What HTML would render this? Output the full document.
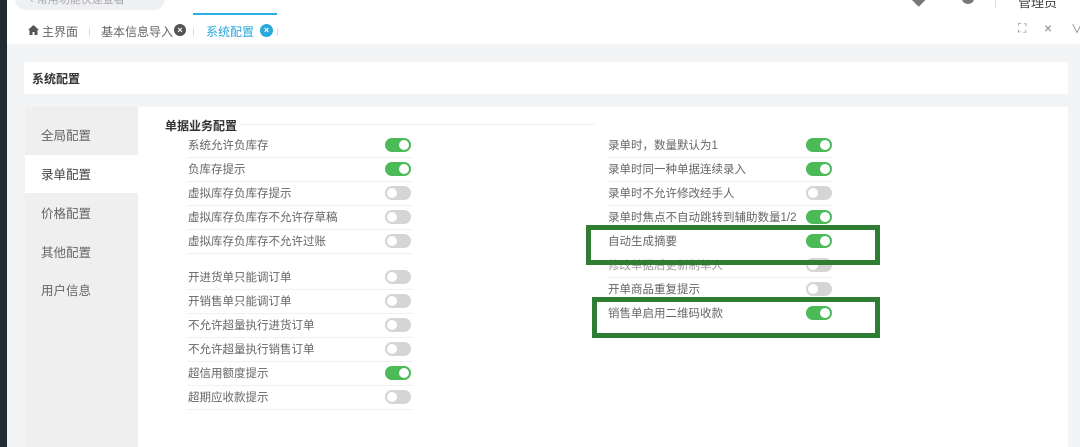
<!DOCTYPE html>
<html><head><meta charset="utf-8"><style>
*{margin:0;padding:0;box-sizing:border-box}
body{width:1080px;height:447px;overflow:hidden;background:#f3f4f6;font-family:"Liberation Sans","Noto Sans CJK SC",sans-serif;position:relative;color:#555}
.a{position:absolute}
.t{font-size:11.5px;color:#666;white-space:nowrap}
.tg{position:absolute;width:26px;height:14px;border-radius:7px;background:#d5d5d5}
.tg::after{content:"";position:absolute;top:2px;left:2px;width:10px;height:10px;border-radius:50%;background:#fff}
.tg.on{background:#4cbb57}
.tg.on::after{left:14px}
.ln{position:absolute;height:1px;background:#f0f0f0}
.gb{position:absolute;border:5px solid #2f7d32}
</style></head><body>
<div class="a" style="left:0;top:0;width:1080px;height:44px;background:#fff"></div>
<div class="a" style="left:0;top:0;width:7px;height:447px;background:#1f2a33"></div>
<div class="a" style="left:15px;top:-12px;width:150px;height:22px;border-radius:11px;background:#eef0f4"></div>
<div class="a t" style="left:30px;top:-9px;color:#aaa;font-size:11px">‹ 常用功能快速查看</div>
<div class="a" style="left:912px;top:-6px;width:12px;height:10px;background:#777;transform:rotate(45deg)"></div>
<div class="a" style="left:962px;top:-6px;width:12px;height:10px;border-radius:50%;background:#777"></div>
<div class="a" style="left:995px;top:-4px;width:1px;height:12px;background:#ddd"></div>
<div class="a t" style="left:1018px;top:-8px;font-size:13px;color:#444">管理员</div>
<div class="a" style="left:193px;top:13px;width:84px;height:2px;background:#2ab0e0"></div>
<svg class="a" style="left:28px;top:25px" width="11" height="10" viewBox="0 0 11 10"><path d="M5.5 0L0 5h1.5v5h3V7h2v3h3V5H11z" fill="#555"/></svg>
<div class="a t" style="left:42px;top:23px;font-size:12px;color:#666">主界面</div>
<div class="a" style="left:89px;top:28px;width:1px;height:8px;background:#ddd"></div>
<div class="a t" style="left:101px;top:23px;font-size:12px;color:#666">基本信息导入</div>
<div class="a" style="left:174px;top:24px;width:12px;height:12px;border-radius:50%;background:#555;color:#fff;font-size:9px;line-height:12px;text-align:center;font-weight:bold">×</div>
<div class="a" style="left:193px;top:28px;width:1px;height:8px;background:#ddd"></div>
<div class="a t" style="left:206px;top:23px;font-size:12px;color:#29a8dd">系统配置</div>
<div class="a" style="left:260px;top:24px;width:13px;height:13px;border-radius:50%;background:#29a8dd;color:#fff;font-size:9px;line-height:13px;text-align:center;font-weight:bold">×</div>
<div class="a" style="left:277px;top:28px;width:1px;height:8px;background:#ddd"></div>
<div class="a t" style="left:1018px;top:21px;font-size:12px;color:#888">⛶</div>
<div class="a t" style="left:1044px;top:20px;font-size:14px;color:#888">×</div>
<div class="a t" style="left:1071px;top:20px;font-size:12px;color:#888">∨</div>
<div class="a" style="left:24px;top:62px;width:1044px;height:32px;background:#fff"></div>
<div class="a" style="left:32px;top:70px;font-size:12px;font-weight:bold;color:#333">系统配置</div>
<div class="a" style="left:25px;top:107px;width:113px;height:340px;background:#efefef"></div>
<div class="a" style="left:25px;top:155px;width:113px;height:38px;background:#fff"></div>
<div class="a t" style="left:41px;top:125px;font-size:12.5px">全局配置</div>
<div class="a t" style="left:41px;top:164px;font-size:12.5px;color:#444">录单配置</div>
<div class="a t" style="left:41px;top:203px;font-size:12.5px">价格配置</div>
<div class="a t" style="left:41px;top:242px;font-size:12.5px">其他配置</div>
<div class="a t" style="left:41px;top:280px;font-size:12.5px">用户信息</div>
<div class="a" style="left:138px;top:107px;width:930px;height:340px;background:#fff"></div>
<div class="a" style="left:165px;top:117px;font-size:12px;font-weight:bold;color:#333">单据业务配置</div>
<div class="a" style="left:240px;top:124px;width:355px;height:1px;background:#eee"></div>

<div class="a t" style="left:188px;top:137px">系统允许负库存</div><div class="tg on" style="left:385px;top:138px"></div><div class="ln" style="left:187px;top:157px;width:225px"></div>
<div class="a t" style="left:188px;top:161px">负库存提示</div><div class="tg on" style="left:385px;top:162px"></div><div class="ln" style="left:187px;top:181px;width:225px"></div>
<div class="a t" style="left:188px;top:185px">虚拟库存负库存提示</div><div class="tg" style="left:385px;top:186px"></div><div class="ln" style="left:187px;top:205px;width:225px"></div>
<div class="a t" style="left:188px;top:209px">虚拟库存负库存不允许存草稿</div><div class="tg" style="left:385px;top:210px"></div><div class="ln" style="left:187px;top:229px;width:225px"></div>
<div class="a t" style="left:188px;top:233px">虚拟库存负库存不允许过账</div><div class="tg" style="left:385px;top:234px"></div><div class="ln" style="left:187px;top:253px;width:225px"></div>

<div class="a t" style="left:188px;top:269px">开进货单只能调订单</div><div class="tg" style="left:385px;top:270px"></div><div class="ln" style="left:187px;top:289px;width:225px"></div>
<div class="a t" style="left:188px;top:293px">开销售单只能调订单</div><div class="tg" style="left:385px;top:294px"></div><div class="ln" style="left:187px;top:313px;width:225px"></div>
<div class="a t" style="left:188px;top:317px">不允许超量执行进货订单</div><div class="tg" style="left:385px;top:318px"></div><div class="ln" style="left:187px;top:337px;width:225px"></div>
<div class="a t" style="left:188px;top:341px">不允许超量执行销售订单</div><div class="tg" style="left:385px;top:342px"></div><div class="ln" style="left:187px;top:361px;width:225px"></div>
<div class="a t" style="left:188px;top:365px">超信用额度提示</div><div class="tg on" style="left:385px;top:366px"></div><div class="ln" style="left:187px;top:385px;width:225px"></div>
<div class="a t" style="left:188px;top:389px">超期应收款提示</div><div class="tg" style="left:385px;top:390px"></div><div class="ln" style="left:187px;top:409px;width:225px"></div>

<div class="a t" style="left:608px;top:137px">录单时，数量默认为1</div><div class="tg on" style="left:806px;top:138px"></div><div class="ln" style="left:607px;top:157px;width:226px"></div>
<div class="a t" style="left:608px;top:161px">录单时同一种单据连续录入</div><div class="tg on" style="left:806px;top:162px"></div><div class="ln" style="left:607px;top:181px;width:226px"></div>
<div class="a t" style="left:608px;top:185px">录单时不允许修改经手人</div><div class="tg" style="left:806px;top:186px"></div><div class="ln" style="left:607px;top:205px;width:226px"></div>
<div class="a t" style="left:608px;top:209px">录单时焦点不自动跳转到辅助数量1/2</div><div class="tg on" style="left:806px;top:210px"></div><div class="ln" style="left:607px;top:229px;width:226px"></div>
<div class="a t" style="left:608px;top:233px">自动生成摘要</div><div class="tg on" style="left:806px;top:234px"></div>
<div class="a t" style="left:608px;top:257px;color:#999">修改单据后更新制单人</div><div class="tg" style="left:806px;top:258px"></div><div class="ln" style="left:607px;top:277px;width:226px"></div>
<div class="a t" style="left:608px;top:281px">开单商品重复提示</div><div class="tg" style="left:806px;top:282px"></div>
<div class="a t" style="left:608px;top:305px">销售单启用二维码收款</div><div class="tg on" style="left:806px;top:306px"></div>

<div class="gb" style="left:586px;top:225px;width:294px;height:40px"></div>
<div class="gb" style="left:592px;top:297px;width:288px;height:41px"></div>
</body></html>
